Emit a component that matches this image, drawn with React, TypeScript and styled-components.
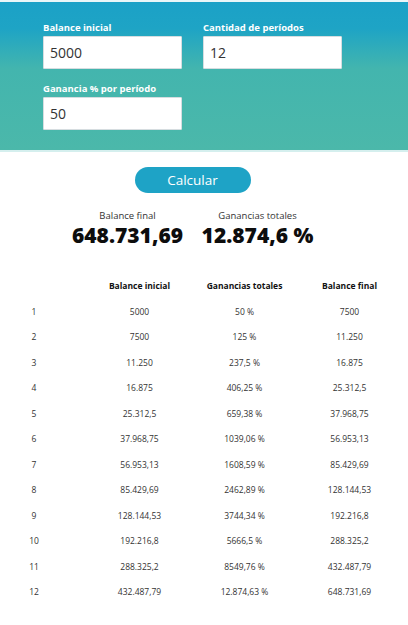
import React from "react";
import styled, { createGlobalStyle } from "styled-components";

const GlobalStyle = createGlobalStyle`
  html, body {
    margin: 0;
    padding: 0;
    background: #ffffff;
    font-family: "Open Sans", "Noto Sans", sans-serif;
  }
`;

type Row = {
  period: number;
  start: string;
  gain: string;
  end: string;
};

const ROWS: Row[] = [
  { period: 1, start: "5000", gain: "50 %", end: "7500" },
  { period: 2, start: "7500", gain: "125 %", end: "11.250" },
  { period: 3, start: "11.250", gain: "237,5 %", end: "16.875" },
  { period: 4, start: "16.875", gain: "406,25 %", end: "25.312,5" },
  { period: 5, start: "25.312,5", gain: "659,38 %", end: "37.968,75" },
  { period: 6, start: "37.968,75", gain: "1039,06 %", end: "56.953,13" },
  { period: 7, start: "56.953,13", gain: "1608,59 %", end: "85.429,69" },
  { period: 8, start: "85.429,69", gain: "2462,89 %", end: "128.144,53" },
  { period: 9, start: "128.144,53", gain: "3744,34 %", end: "192.216,8" },
  { period: 10, start: "192.216,8", gain: "5666,5 %", end: "288.325,2" },
  { period: 11, start: "288.325,2", gain: "8549,76 %", end: "432.487,79" },
  { period: 12, start: "432.487,79", gain: "12.874,63 %", end: "648.731,69" },
];

const Page = styled.div`
  width: 408px;
  min-height: 625px;
  border-top: 2px solid #e9f6f8;
  box-sizing: border-box;
`;

const Header = styled.header`
  height: 148px;
  background: linear-gradient(180deg, #1ba1c7 0%, #1ea4c5 18%, #43b5ae 45%, #4bb8aa 100%);
  border-bottom: 2px solid #d5efee;
  box-sizing: content-box;
`;

const Form = styled.div`
  width: 385px;
  padding-top: 20px;
  display: grid;
  grid-template-columns: 139px 139px;
  column-gap: 21px;
  row-gap: 14px;
  justify-content: center;
`;

const Field = styled.label`
  display: flex;
  flex-direction: column;
  gap: 3px;
`;

const FieldLabel = styled.span`
  color: #ffffff;
  font-size: 9.5px;
  font-weight: 700;
  line-height: 11px;
`;

const Input = styled.input`
  box-sizing: border-box;
  width: 139px;
  height: 33px;
  border: 1px solid #d6dde0;
  border-radius: 1px;
  background: #ffffff;
  padding: 0 6px;
  font-family: "Open Sans", sans-serif;
  font-size: 14px;
  color: #333333;
  outline: none;
`;

const Main = styled.main`
  width: 385px;
  display: flex;
  flex-direction: column;
  align-items: center;
`;

const CalcButton = styled.button`
  margin-top: 15px;
  width: 116px;
  height: 26px;
  border: none;
  border-radius: 13px;
  background: #1ea3c6;
  color: #ffffff;
  font-family: "Open Sans", sans-serif;
  font-size: 13.5px;
  cursor: pointer;
`;

const Summary = styled.div`
  margin-top: 16px;
  display: flex;
  justify-content: center;
`;

const Stat = styled.div`
  width: 130px;
  display: flex;
  flex-direction: column;
  align-items: center;
`;

const StatLabel = styled.span`
  font-size: 9.5px;
  color: #333333;
  line-height: 13px;
`;

const StatValue = styled.span`
  font-size: 21px;
  font-weight: 800;
  color: #0d0d0d;
  line-height: 26px;
`;

const Table = styled.div`
  margin-top: 25px;
  width: 385px;
  padding-left: 16px;
  box-sizing: border-box;
  display: grid;
  grid-template-columns: 71px 105px 105px 105px;
  grid-auto-rows: 25.5px;
  align-items: center;
  font-size: 8.5px;
  color: #333333;
`;

const Cell = styled.div<{ $head?: boolean; $index?: boolean }>`
  text-align: center;
  font-weight: ${(p) => (p.$head ? 700 : 400)};
  color: ${(p) => (p.$head ? "#111111" : "#333333")};
  padding-right: ${(p) => (p.$index ? "35px" : "0")};
  white-space: nowrap;
`;

export default function App() {
  return (
    <Page>
      <GlobalStyle />
      <Header>
        <Form>
          <Field>
            <FieldLabel>Balance inicial</FieldLabel>
            <Input defaultValue="5000" />
          </Field>
          <Field>
            <FieldLabel>Cantidad de períodos</FieldLabel>
            <Input defaultValue="12" />
          </Field>
          <Field>
            <FieldLabel>Ganancia % por período</FieldLabel>
            <Input defaultValue="50" />
          </Field>
        </Form>
      </Header>
      <Main>
        <CalcButton>Calcular</CalcButton>
        <Summary>
          <Stat>
            <StatLabel>Balance final</StatLabel>
            <StatValue>648.731,69</StatValue>
          </Stat>
          <Stat>
            <StatLabel>Ganancias totales</StatLabel>
            <StatValue>12.874,6 %</StatValue>
          </Stat>
        </Summary>
        <Table>
          <Cell $index />
          <Cell $head>Balance inicial</Cell>
          <Cell $head>Ganancias totales</Cell>
          <Cell $head>Balance final</Cell>
          {ROWS.map((r) => (
            <React.Fragment key={r.period}>
              <Cell $index>{r.period}</Cell>
              <Cell>{r.start}</Cell>
              <Cell>{r.gain}</Cell>
              <Cell>{r.end}</Cell>
            </React.Fragment>
          ))}
        </Table>
      </Main>
    </Page>
  );
}
